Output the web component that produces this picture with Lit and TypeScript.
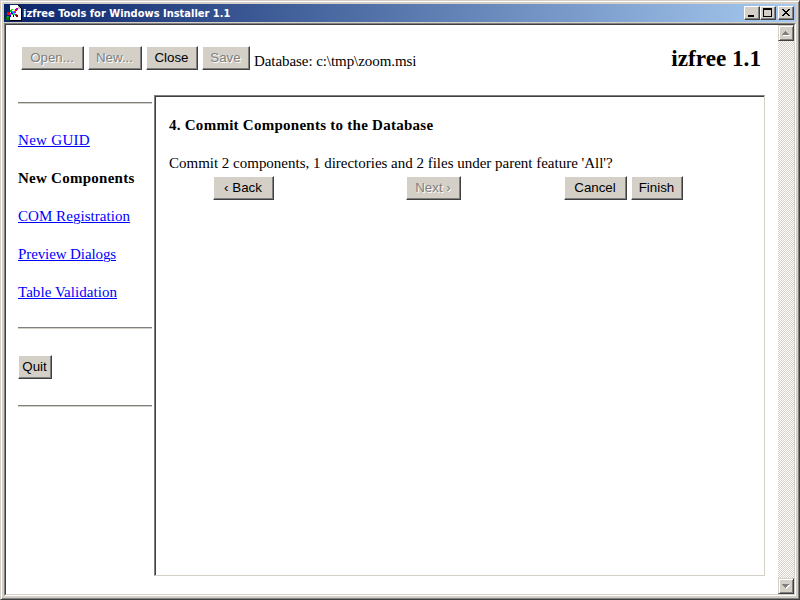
import { LitElement, html, css, svg } from "lit";
import { customElement, property } from "lit/decorators.js";

@customElement("classic-button")
class ClassicButton extends LitElement {
  @property() label = "";
  @property({ type: Number }) width = 60;
  @property({ type: Boolean }) disabled = false;

  static styles = css`
    :host { display: block; flex: none; }
    .btn {
      display: block; box-sizing: border-box; height: 24px; padding: 0 1px 1px 0; margin: 0;
      background: #d4d0c8; border: 1px solid; border-color: #fff #404040 #404040 #fff;
      box-shadow: inset -1px -1px #808080; border-radius: 0;
      font: 13.33px/20px "Liberation Sans", Arial, sans-serif; color: #000;
      text-align: center; white-space: nowrap;
    }
    .btn:disabled { color: #808080; text-shadow: 1px 1px #fff; }
  `;

  render() {
    return html`<button class="btn" ?disabled=${this.disabled} style="width:${this.width}px">${this.label}</button>`;
  }
}

const PIXELS: [number, number, number, number, string][] = [
  [0, 12, 3, 3, "#008000"], [1, 11, 2, 1, "#00c000"], [1, 7, 2, 3, "#ff0000"], [3, 8, 2, 2, "#e000e0"],
  [4, 5, 2, 2, "#00c000"], [5, 4, 2, 1, "#00ff00"], [5, 7, 2, 2, "#0000c0"], [6, 6, 2, 2, "#00a0ff"],
  [7, 8, 2, 2, "#00c0c0"], [9, 9, 2, 2, "#ff0000"], [10, 10, 2, 2, "#800000"], [7, 10, 1, 2, "#000080"],
  [8, 6, 2, 2, "#e000e0"], [9, 4, 2, 2, "#ff0000"], [10, 3, 2, 2, "#c000c0"], [5, 9, 2, 1, "#00ff00"],
  [3, 10, 2, 2, "#0000ff"], [8, 5, 1, 1, "#ffff00"],
];

const LINKS = [
  { text: "New GUID", cls: "guid" },
  { text: "New Components", current: true, cls: "bold" },
  { text: "COM Registration", cls: "com" },
  { text: "Preview Dialogs", cls: "preview" },
  { text: "Table Validation", cls: "table" },
];

@customElement("app-root")
class AppRoot extends LitElement {
  static styles = css`
    :host { display: block; width: 800px; height: 600px; overflow: hidden; }
    * { box-sizing: border-box; }
    .window {
      width: 800px; height: 600px; background: #d4d0c8; border: 1px solid;
      border-color: #d4d0c8 #404040 #404040 #d4d0c8;
      box-shadow: inset 1px 1px #fff, inset -1px -1px #808080;
      padding: 3px; display: flex; flex-direction: column;
      font: 15px/19px "Liberation Serif", "Times New Roman", serif; color: #000;
    }
    .titlebar {
      height: 18px; flex: none; width: 792px; margin-bottom: 1px; padding: 0 2px;
      background: linear-gradient(90deg, #0a246a, #a6caf0);
      display: flex; align-items: center;
    }
    .icon { display: block; width: 16px; height: 16px; flex: none; }
    .title {
      flex: 1; margin-left: 1px; color: #fff; white-space: nowrap;
      font: bold 11px/18px "DejaVu Sans Condensed", Tahoma, sans-serif;
      padding-top: 1px; height: 18px;
    }
    .cap {
      width: 16px; height: 14px; background: #d4d0c8; border: 1px solid;
      border-color: #fff #404040 #404040 #fff; box-shadow: inset -1px -1px #808080;
    }
    .cap.close { margin-left: 2px; }
    .cap svg, .arrow svg { display: block; }
    .client {
      flex: none; width: 792px; height: 573px; background: #fff; border: 1px solid;
      border-color: #808080 #fff #fff #808080; display: flex;
    }
    .inner {
      flex: 1; display: flex; border: 1px solid; border-color: #404040 #d4d0c8 #d4d0c8 #404040;
    }
    .page { width: 772px; display: flex; flex-direction: column; }
    .scroll {
      width: 16px; display: flex; flex-direction: column; justify-content: space-between;
      background: repeating-conic-gradient(#fff 0 25%, #d4d0c8 0 50%) 0 0 / 2px 2px;
    }
    .arrow {
      width: 16px; height: 16px; background: #d4d0c8; border: 1px solid;
      border-color: #d4d0c8 #404040 #404040 #d4d0c8;
      box-shadow: inset 1px 1px #fff, inset -1px -1px #808080;
    }
    .toolbar { height: 70px; flex: none; display: flex; gap: 4px; padding: 21px 17px 0 15px; }
    .db { line-height: 19px; margin-top: 6px; letter-spacing: -0.07px; white-space: nowrap; }
    .brand { margin: -2px 0 0 auto; font: bold 23.2px/28px "Liberation Serif", serif; white-space: nowrap; }
    .body { display: flex; }
    .side { width: 134px; margin-left: 12px; padding-top: 7px; }
    .rule { height: 2px; background: linear-gradient(#808080 50%, #d4d0c8 50%); }
    .links { display: flex; flex-direction: column; align-items: flex-start; gap: 19px; margin: 27px 0 25px; white-space: nowrap; }
    .link { color: #00f; text-decoration: underline; text-decoration-thickness: 1px; text-underline-offset: 1px; }
    .bold { font-weight: bold; letter-spacing: 0.26px; }
    .guid { letter-spacing: 0.3px; }
    .com { letter-spacing: 0.05px; }
    .preview { letter-spacing: -0.1px; }
    .table { letter-spacing: 0.05px; }
    .quit { margin: 26px 0; }
    .frame {
      width: 611px; height: 481px; margin-left: 2px; border: 1px solid;
      border-color: #808080 #d4d0c8 #d4d0c8 #808080;
      box-shadow: inset 1px 1px #404040; padding: 20px 14px 0;
    }
    .line { white-space: nowrap; }
    .question { margin-top: 19px; letter-spacing: -0.01px; }
    .actions { display: flex; margin: 3px 0 0 44px; }
    .next { margin-left: 132px; }
    .cancel { margin-left: 103px; }
    .finish { margin-left: 4px; }
  `;

  private glyph(kind: string) {
    const shapes: Record<string, unknown> = {
      min: svg`<path d="M3 8h6v2H3z"/>`,
      max: svg`<path fill-rule="evenodd" d="M2 1h9v9H2zM3 3v6h7V3z"/>`,
      close: svg`<path d="M3 2h2v1h-2zM9 2h2v1h-2zM4 3h2v1h-2zM8 3h2v1h-2zM5 4h4v1h-4zM6 5h2v1h-2zM5 6h4v1h-4zM4 7h2v1h-2zM8 7h2v1h-2zM3 8h2v1h-2zM9 8h2v1h-2z"/>`,
    };
    return html`<div class="cap ${kind}"><svg width="14" height="12" shape-rendering="crispEdges">${shapes[kind]}</svg></div>`;
  }

  private arrow(up: boolean) {
    const d = up ? "M6 5h1v1h1v1h1v1h1v1H3V8h1V7h1V6h1z" : "M3 5h7v1H9v1H8v1H7v1H6V8H5V7H4V6H3z";
    return html`<div class="arrow"><svg width="14" height="14" shape-rendering="crispEdges">
      <path d=${d} fill="#fff" transform="translate(1 1)"/><path d=${d} fill="#808080"/>
    </svg></div>`;
  }

  render() {
    return html`
      <div class="window">
        <div class="titlebar">
          <svg class="icon" viewBox="0 0 16 16" shape-rendering="crispEdges">
            <path d="M4 0h9v1h1v1h1v1h1v13H4z" fill="#000"/>
            <path d="M4 0h8v4h3v11H4z" fill="#fff"/>
            <path d="M12 1h1v1h1v1h1v1h-3z" fill="#c0c0c0"/>
            ${PIXELS.map(([x, y, w, h, c]) => svg`<rect x=${x} y=${y} width=${w} height=${h} fill=${c} />`)}
          </svg>
          <div class="title">izfree Tools for Windows Installer 1.1</div>
          ${this.glyph("min")}${this.glyph("max")}${this.glyph("close")}
        </div>
        <div class="client"><div class="inner">
          <div class="page">
            <div class="toolbar">
              <classic-button label="Open..." width="63" disabled></classic-button>
              <classic-button label="New..." width="54" disabled></classic-button>
              <classic-button label="Close" width="52"></classic-button>
              <classic-button label="Save" width="48" disabled></classic-button>
              <div class="db">Database: c:\\tmp\\zoom.msi</div>
              <div class="brand">izfree 1.1</div>
            </div>
            <div class="body">
              <div class="side">
                <div class="rule"></div>
                <div class="links">
                  ${LINKS.map((l) => html`<span class="${l.current ? "" : "link"} ${l.cls}">${l.text}</span>`)}
                </div>
                <div class="rule"></div>
                <classic-button class="quit" label="Quit" width="34"></classic-button>
                <div class="rule"></div>
              </div>
              <div class="frame">
                <div class="line bold">4. Commit Components to the Database</div>
                <div class="line question">Commit 2 components, 1 directories and 2 files under parent feature 'All'?</div>
                <div class="actions">
                  <classic-button label="‹ Back" width="61"></classic-button>
                  <classic-button class="next" label="Next ›" width="55" disabled></classic-button>
                  <classic-button class="cancel" label="Cancel" width="63"></classic-button>
                  <classic-button class="finish" label="Finish" width="52"></classic-button>
                </div>
              </div>
            </div>
          </div>
          <div class="scroll">${this.arrow(true)}${this.arrow(false)}</div>
        </div></div>
      </div>
    `;
  }
}
